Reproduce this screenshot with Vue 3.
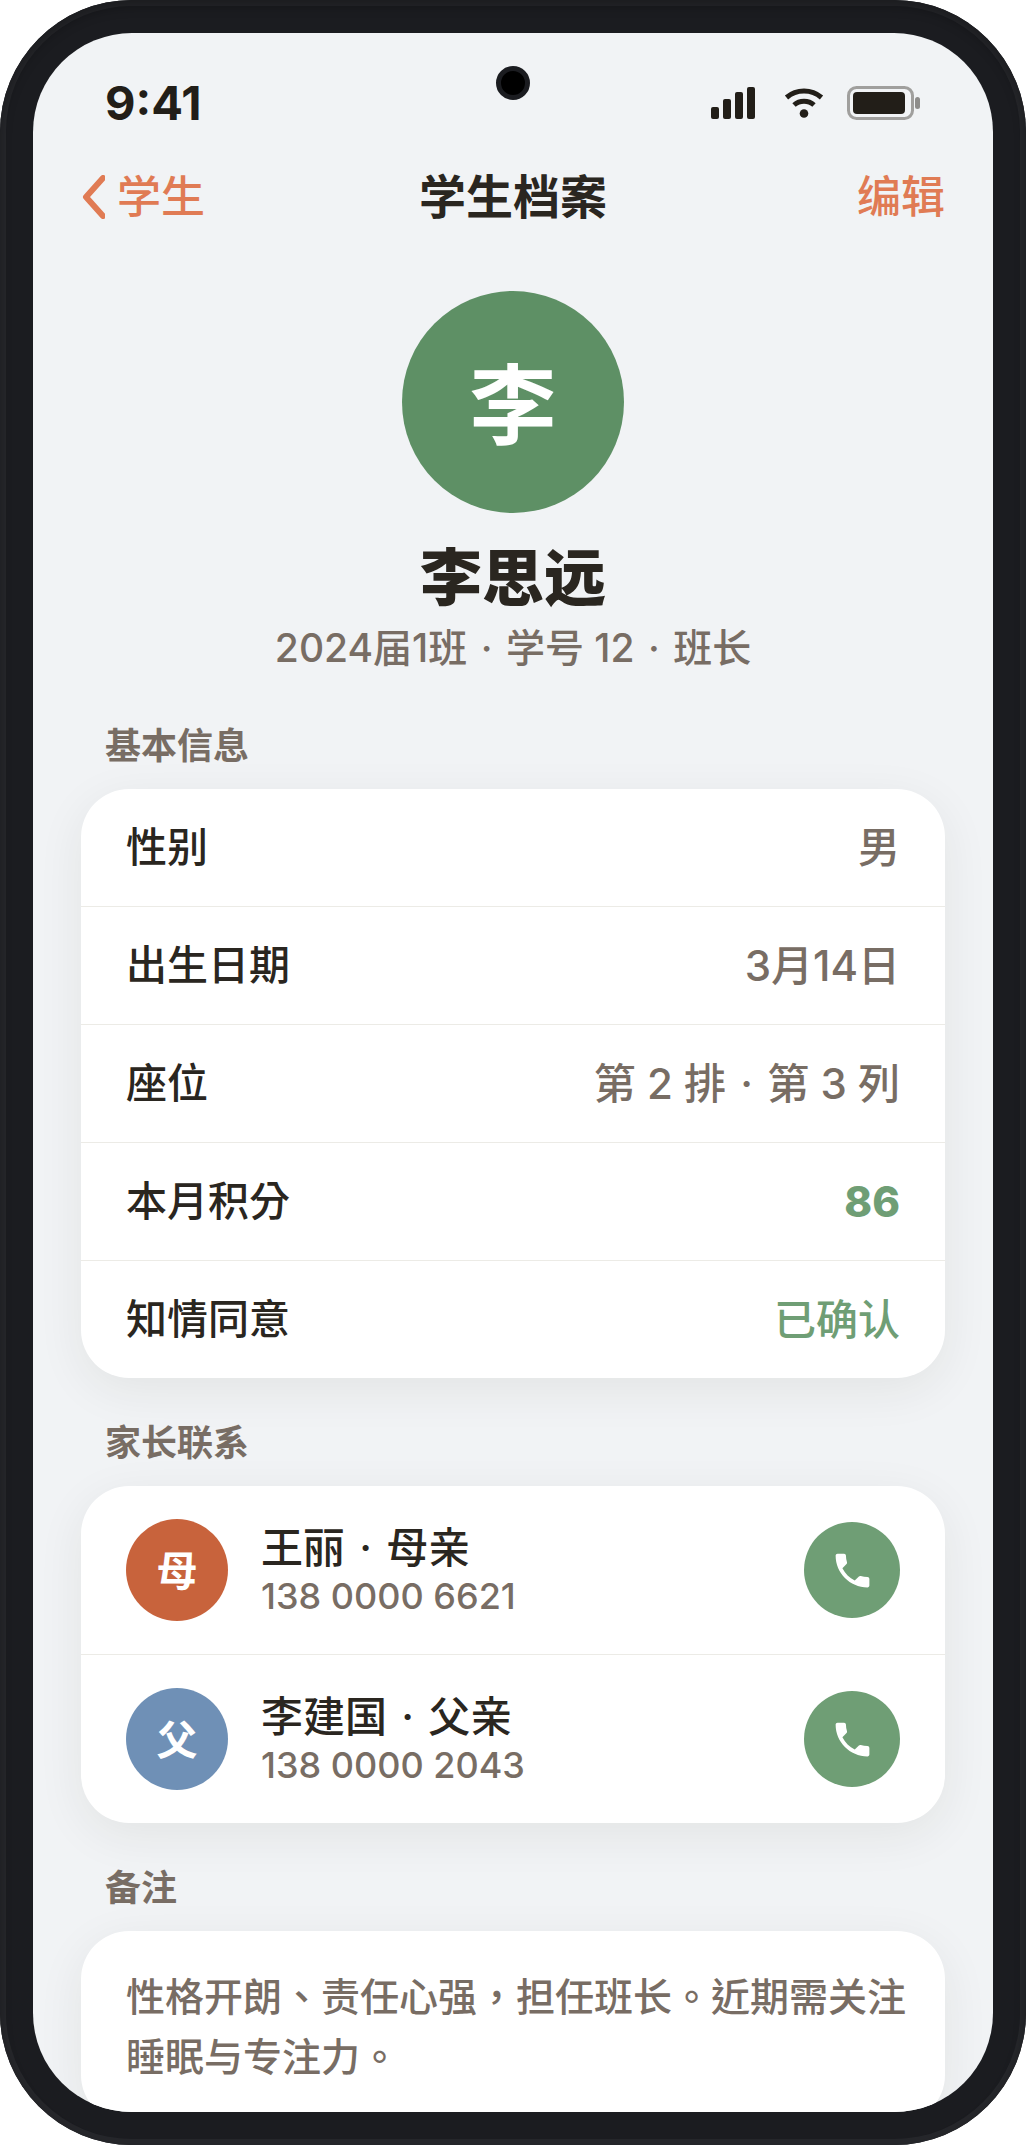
<template>
  <div class="phone">
    <div class="screen">
      <span class="camera"></span>

      <div class="status-bar">
        <span class="time">9:41</span>
        <div class="status-icons">
          <svg class="signal" viewBox="0 0 44 32">
            <rect x="0" y="20" width="8" height="12" rx="2" />
            <rect x="12" y="12" width="8" height="20" rx="2" />
            <rect x="24" y="5" width="8" height="27" rx="2" />
            <rect x="36" y="0" width="8" height="32" rx="2" />
          </svg>
          <svg class="wifi" viewBox="0 0 40 32">
            <path d="M2.5 10.5A27 27 0 0 1 37.5 10.5" />
            <path d="M10 18A15 15 0 0 1 30 18" />
            <circle cx="20" cy="26.5" r="4.3" />
          </svg>
          <svg class="battery" viewBox="0 0 74 34">
            <rect class="shell" x="1.5" y="1.5" width="64" height="31" rx="8" />
            <rect x="6" y="6" width="52" height="22" rx="4" />
            <rect class="cap" x="68" y="11" width="5" height="12" rx="2.5" />
          </svg>
        </div>
      </div>

      <header class="nav-bar">
        <button class="nav-btn">
          <svg viewBox="0 0 24 44"><path d="M22 3L5 22L22 41" /></svg>
          学生
        </button>
        <h1>学生档案</h1>
        <button class="nav-btn edit">编辑</button>
      </header>

      <main>
        <section class="profile">
          <div class="avatar">李</div>
          <h2>李思远</h2>
          <p>2024届1班 <span class="dot">·</span> 学号 12 <span class="dot">·</span> 班长</p>
        </section>

        <!-- 基本信息 -->
        <section>
          <h3>基本信息</h3>
          <dl class="card">
            <div class="info-row">
              <dt>性别</dt>
              <dd>男</dd>
            </div>
            <div class="info-row">
              <dt>出生日期</dt>
              <dd>3月14日</dd>
            </div>
            <div class="info-row">
              <dt>座位</dt>
              <dd>第 2 排 <span class="dot">·</span> 第 3 列</dd>
            </div>
            <div class="info-row">
              <dt>本月积分</dt>
              <dd class="score">86</dd>
            </div>
            <div class="info-row">
              <dt>知情同意</dt>
              <dd class="ok">已确认</dd>
            </div>
          </dl>
        </section>

        <!-- 家长联系 -->
        <section>
          <h3>家长联系</h3>
          <ul class="card">
            <li v-for="p in parents" :key="p.phone" class="parent-row">
              <span class="parent-avatar" :class="p.type">{{ p.short }}</span>
              <div class="parent-text">
                <div class="parent-name">{{ p.name }} <span class="dot">·</span> {{ p.relation }}</div>
                <div class="parent-phone">{{ p.phone }}</div>
              </div>
              <button class="call-btn" :aria-label="'拨打 ' + p.name">
                <svg viewBox="0 0 24 24">
                  <path d="M6.62 10.79c1.44 2.83 3.76 5.14 6.59 6.59l2.2-2.2c.27-.27.67-.36 1.02-.24 1.12.37 2.33.57 3.57.57.55 0 1 .45 1 1V20c0 .55-.45 1-1 1-9.39 0-17-7.61-17-17 0-.55.45-1 1-1h3.5c.55 0 1 .45 1 1 0 1.25.2 2.45.57 3.57.11.35.03.74-.25 1.02l-2.2 2.2z" />
                </svg>
              </button>
            </li>
          </ul>
        </section>

        <!-- 备注 -->
        <section>
          <h3>备注</h3>
          <p class="card note">性格开朗、责任心强，担任班长。近期需关注睡眠与专注力。</p>
        </section>
      </main>
    </div>
  </div>
</template>

<script setup>
const parents = [
  { short: '母', name: '王丽', relation: '母亲', phone: '138 0000 6621', type: 'mother' },
  { short: '父', name: '李建国', relation: '父亲', phone: '138 0000 2043', type: 'father' },
]
</script>

<style>
body { margin:0; background:#fff; }
</style>

<style scoped>
* { box-sizing:border-box; }
.phone { height:100vh; padding:33px; border-radius:132px; background:#1b1c20; box-shadow:inset 0 6px 12px rgba(0,0,0,0.3), inset 0 0 0 6px #26272b; font-family:Inter, "Noto Sans CJK TC", sans-serif; font-weight:500; color:#2a2620; }
.screen { position:relative; height:100%; overflow:hidden; border-radius:99px; background:#f1f3f5; }
h1, h2, h3, p, dl, dd, ul { margin:0; padding:0; }
button { padding:0; border:none; background:none; font:inherit; cursor:pointer; }
.camera { position:absolute; top:33px; left:50%; width:34px; height:34px; margin-left:-17px; border:5px solid #1b1c20; border-radius:50%; background:#000; }
.dot { margin:0 3px; }

.status-bar { display:flex; align-items:center; justify-content:space-between; height:108px; padding:31px 72px 0; color:#221e18; }
.time { font-size:47px; font-weight:700; line-height:48px; }
.status-icons { display:flex; align-items:center; gap:29px; }
.status-icons svg { display:block; fill:#221e18; }
.signal { width:44px; height:32px; }
.wifi { width:40px; height:32px; }
.wifi path { fill:none; stroke:#221e18; stroke-width:5; }
.battery { width:74px; height:34px; margin-left:-6px; }
.battery .shell { fill:none; stroke:#a09f9d; stroke-width:3; }
.battery .cap { fill:#8e8d8b; }

.nav-bar { display:grid; grid-template-columns:1fr auto 1fr; align-items:center; height:108px; padding:3px 48px 0; }
.nav-bar h1 { font-size:47px; font-weight:700; line-height:60px; }
.nav-btn { display:flex; align-items:center; gap:12px; font-size:44px; line-height:60px; color:#e07b54; }
.nav-btn svg { width:24px; height:44px; fill:none; stroke:#e07b54; stroke-width:6; stroke-linecap:round; stroke-linejoin:round; }
.edit { justify-self:end; }

main { padding:42px 48px; }
.profile { text-align:center; }
.avatar { display:flex; align-items:center; justify-content:center; width:222px; height:222px; margin:0 auto; padding-bottom:4px; border-radius:50%; background:#5e9065; color:#fff; font-size:87px; font-weight:700; }
.profile h2 { margin-top:30px; font-size:62px; font-weight:900; line-height:72px; }
.profile p { font-size:39px; line-height:66px; color:#786d64; }

h3 { margin:46px 24px 24px; font-size:36px; font-weight:600; line-height:38px; color:#786d64; }
.card { border-radius:48px; background:#fff; box-shadow:0 12px 48px rgba(40,36,20,0.07); list-style:none; }
.info-row { display:flex; align-items:center; justify-content:space-between; padding:0 45px; font-size:42px; line-height:117px; }
.info-row + .info-row, .parent-row + .parent-row { border-top:1px solid #ecebe6; }
.info-row dt { font-size:41px; }
.info-row dd { color:#786d64; }
.info-row .score { color:#6f9e75; font-weight:800; }
.info-row .ok { color:#6f9e75; }

.parent-row { display:flex; align-items:center; gap:33px; padding:33px 45px; }
.parent-avatar { display:flex; align-items:center; justify-content:center; width:102px; height:102px; padding-bottom:4px; border-radius:50%; color:#fff; font-size:41px; font-weight:700; }
.mother { background:#c8633c; }
.father { background:#6f90b6; }
.parent-text { flex:1; padding-top:4px; }
.parent-name { font-size:42px; line-height:48px; }
.parent-phone { font-size:36px; line-height:48px; color:#786d64; }
.call-btn { display:flex; align-items:center; justify-content:center; width:96px; height:96px; border-radius:50%; background:#6f9e75; }
.call-btn svg { width:45px; height:45px; fill:#fff; }

.note { padding:36px 39px 36px 45px; font-size:39px; line-height:60px; color:#786d64; }
</style>
